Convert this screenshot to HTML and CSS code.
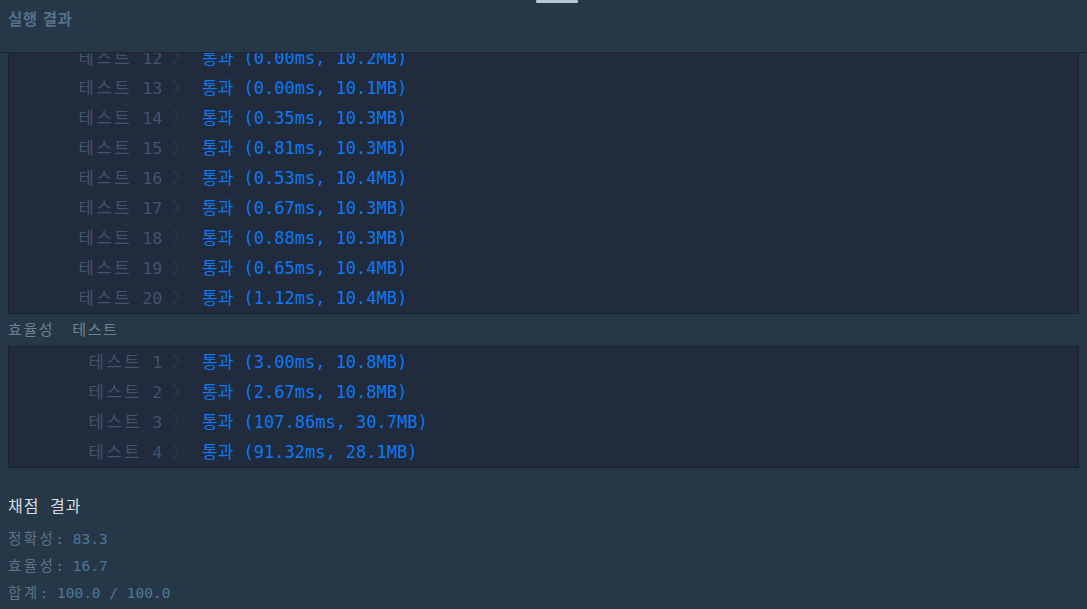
FILE: index.html
```html
<!DOCTYPE html>
<html lang="ko">
<head>
<meta charset="utf-8">
<title>실행 결과</title>
<link rel="stylesheet" href="styles.css">
</head>
<body>
<div class="app">
  <header class="head">
    <div class="handle"></div>
    <h1 class="head-title">실행 결과</h1>
  </header>
  <div class="scroller">
    <div class="content">
      <div class="box">
        <div class="row"><div class="t-title"><span class="kr">테스트</span> 12 <span class="chev">〉</span></div><div class="t-result">통과 (0.00ms, 10.2MB)</div></div>
        <div class="row"><div class="t-title"><span class="kr">테스트</span> 13 <span class="chev">〉</span></div><div class="t-result">통과 (0.00ms, 10.1MB)</div></div>
        <div class="row"><div class="t-title"><span class="kr">테스트</span> 14 <span class="chev">〉</span></div><div class="t-result">통과 (0.35ms, 10.3MB)</div></div>
        <div class="row"><div class="t-title"><span class="kr">테스트</span> 15 <span class="chev">〉</span></div><div class="t-result">통과 (0.81ms, 10.3MB)</div></div>
        <div class="row"><div class="t-title"><span class="kr">테스트</span> 16 <span class="chev">〉</span></div><div class="t-result">통과 (0.53ms, 10.4MB)</div></div>
        <div class="row"><div class="t-title"><span class="kr">테스트</span> 17 <span class="chev">〉</span></div><div class="t-result">통과 (0.67ms, 10.3MB)</div></div>
        <div class="row"><div class="t-title"><span class="kr">테스트</span> 18 <span class="chev">〉</span></div><div class="t-result">통과 (0.88ms, 10.3MB)</div></div>
        <div class="row"><div class="t-title"><span class="kr">테스트</span> 19 <span class="chev">〉</span></div><div class="t-result">통과 (0.65ms, 10.4MB)</div></div>
        <div class="row"><div class="t-title"><span class="kr">테스트</span> 20 <span class="chev">〉</span></div><div class="t-result">통과 (1.12ms, 10.4MB)</div></div>
      </div>
      <div class="group-label"><span class="kr">효율성</span>  <span class="kr">테스트</span></div>
      <div class="box">
        <div class="row"><div class="t-title"><span class="kr">테스트</span> 1 <span class="chev">〉</span></div><div class="t-result">통과 (3.00ms, 10.8MB)</div></div>
        <div class="row"><div class="t-title"><span class="kr">테스트</span> 2 <span class="chev">〉</span></div><div class="t-result">통과 (2.67ms, 10.8MB)</div></div>
        <div class="row"><div class="t-title"><span class="kr">테스트</span> 3 <span class="chev">〉</span></div><div class="t-result">통과 (107.86ms, 30.7MB)</div></div>
        <div class="row"><div class="t-title"><span class="kr">테스트</span> 4 <span class="chev">〉</span></div><div class="t-result">통과 (91.32ms, 28.1MB)</div></div>
      </div>
      <div class="score">
        <div class="score-title">채점 결과</div>
        <div class="score-line"><span class="s-label"><span class="kr">정확성</span>:</span> <span class="s-val">83.3</span></div>
        <div class="score-line"><span class="s-label"><span class="kr">효율성</span>:</span> <span class="s-val">16.7</span></div>
        <div class="score-line"><span class="s-label"><span class="kr">합계</span>:</span> <span class="s-val">100.0 / 100.0</span></div>
      </div>
    </div>
  </div>
</div>
</body>
</html>
```

FILE: styles.css
```css
* { box-sizing: border-box; }
html, body {
  margin: 0;
  padding: 0;
  background: #263747;
}
body {
  font-family: "DejaVu Sans Mono", "Noto Sans CJK KR", monospace;
}
.app {
  height: 100vh;
  display: flex;
  flex-direction: column;
}
.head {
  position: relative;
  z-index: 1;
  height: 53px;
  flex: 0 0 53px;
  padding: 0 8px;
  background: #263747;
  border-bottom: 1px solid #1b2535;
}
.handle {
  width: 42px;
  height: 3px;
  margin-left: 528px;
  background: #b9c6d1;
  border-radius: 1px;
}
.head-title {
  margin: 5px 0 0;
  font-family: "Noto Sans CJK KR", "Noto Sans", sans-serif;
  font-size: 15.5px;
  letter-spacing: 0.6px;
  line-height: 20px;
  font-weight: 700;
  color: #54718a;
}
.scroller {
  flex: 1 1 auto;
  overflow: hidden;
}
.content {
  margin-top: -11px;
  padding: 0 8px;
}
.group-label {
  height: 32px;
  line-height: 32px;
  font-size: 15px;
  white-space: pre;
  color: #6c8291;
}
.group-label .kr {
  letter-spacing: 1.6px;
}
.box {
  background: #202b3d;
  border: 1px solid #19222f;
}
.row {
  display: flex;
  height: 30px;
  line-height: 30px;
  font-size: 16.7px;
  white-space: nowrap;
}
.t-title {
  width: 180px;
  text-align: right;
  color: #435468;
}
.t-title .kr {
  letter-spacing: 2.5px;
}
.chev {
  color: #2d3a4d;
}
.t-result {
  padding-left: 13px;
  font-size: 17px;
  color: #0f78f2;
}
.score {
  padding-top: 24px;
}
.score-title {
  height: 30px;
  line-height: 30px;
  font-size: 16px;
  letter-spacing: 1px;
  color: #d6dee5;
  margin-bottom: 4px;
}
.score-line {
  height: 27px;
  line-height: 27px;
  font-size: 14.5px;
  white-space: pre;
}
.s-label {
  color: #5d7586;
}
.s-label .kr {
  letter-spacing: 2.4px;
}
.s-val {
  color: #4c789c;
}
```
